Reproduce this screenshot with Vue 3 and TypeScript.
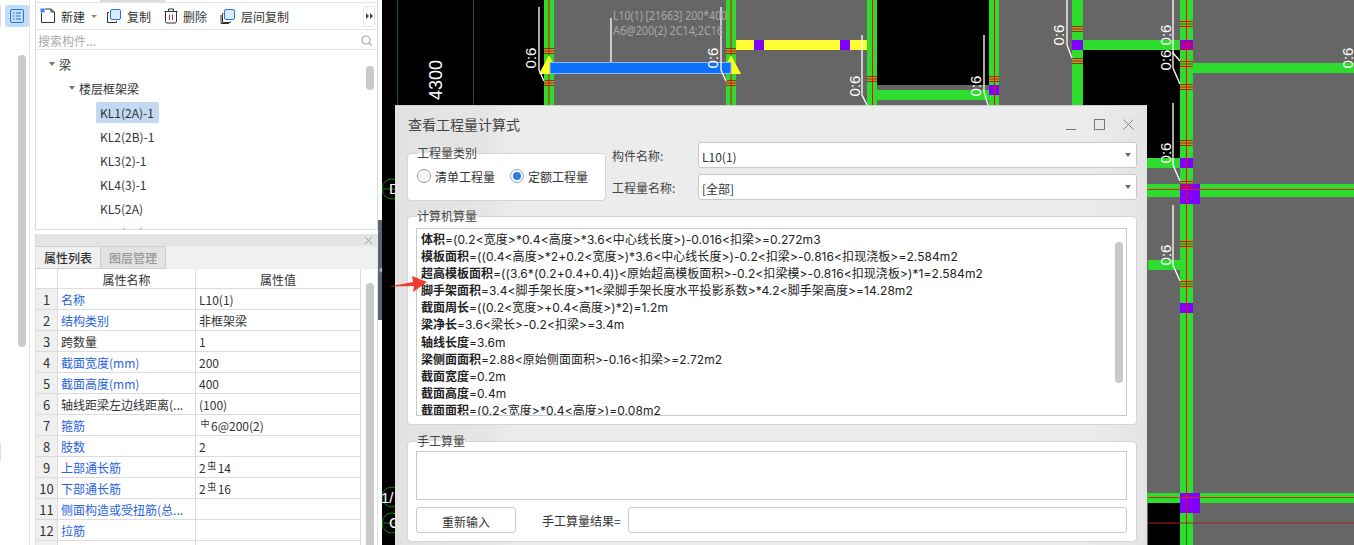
<script setup lang="ts">
interface Prop { no: number; name: string; value: string; blue: boolean; mark?: string; rest?: string; lead?: string }

const tree: string[] = ['KL2(2B)-1', 'KL3(2)-1', 'KL4(3)-1', 'KL5(2A)', 'KL6(2B)']

const props: Prop[] = [
  { no: 1, name: '名称', value: 'L10(1)', blue: true },
  { no: 2, name: '结构类别', value: '非框架梁', blue: true },
  { no: 3, name: '跨数量', value: '1', blue: false },
  { no: 4, name: '截面宽度(mm)', value: '200', blue: true },
  { no: 5, name: '截面高度(mm)', value: '400', blue: true },
  { no: 6, name: '轴线距梁左边线距离(...', value: '(100)', blue: false },
  { no: 7, name: '箍筋', value: '', blue: true, lead: '', mark: '中', rest: '6@200(2)' },
  { no: 8, name: '肢数', value: '2', blue: true },
  { no: 9, name: '上部通长筋', value: '', blue: true, lead: '2', mark: '虫', rest: '14' },
  { no: 10, name: '下部通长筋', value: '', blue: true, lead: '2', mark: '虫', rest: '16' },
  { no: 11, name: '侧面构造或受扭筋(总...', value: '', blue: true },
  { no: 12, name: '拉筋', value: '', blue: true },
  { no: 13, name: '', value: '', blue: false },
]

const formulas: [string, string][] = [
  ['体积', '=(0.2<宽度>*0.4<高度>*3.6<中心线长度>)-0.016<扣梁>=0.272m3'],
  ['模板面积', '=((0.4<高度>*2+0.2<宽度>)*3.6<中心线长度>)-0.2<扣梁>-0.816<扣现浇板>=2.584m2'],
  ['超高模板面积', '=((3.6*(0.2+0.4+0.4))<原始超高模板面积>-0.2<扣梁模>-0.816<扣现浇板>)*1=2.584m2'],
  ['脚手架面积', '=3.4<脚手架长度>*1<梁脚手架长度水平投影系数>*4.2<脚手架高度>=14.28m2'],
  ['截面周长', '=((0.2<宽度>+0.4<高度>)*2)=1.2m'],
  ['梁净长', '=3.6<梁长>-0.2<扣梁>=3.4m'],
  ['轴线长度', '=3.6m'],
  ['梁侧面面积', '=2.88<原始侧面面积>-0.16<扣梁>=2.72m2'],
  ['截面宽度', '=0.2m'],
  ['截面高度', '=0.4m'],
  ['截面面积', '=(0.2<宽度>*0.4<高度>)=0.08m2'],
]

// canvas data: everything is in page pixels, the svg viewBox starts at x=382
const columns: [number, number][] = [[544, 10], [726, 10], [867, 10], [989, 10], [1072, 11], [1180, 13]]
const beams: [number, number, number, number][] = [
  [877, 90, 112, 10], [1083, 40, 97, 10], [1193, 63, 161, 10], [1100, 158, 80, 10],
  [1100, 184, 254, 13], [1148, 260, 32, 10], [1100, 493, 254, 10],
]
const purple: [number, number, number, number][] = [
  [754, 40, 10, 10], [840, 40, 10, 10], [989, 85, 10, 10], [1072, 40, 11, 10], [1180, 40, 13, 10],
  [1180, 158, 13, 10], [1180, 184, 20, 20], [1180, 303, 13, 10], [1180, 493, 20, 20],
]
const hatches: [number, number, number][] = [
  [544, 10, 48], [544, 10, 80], [726, 10, 48], [726, 10, 80], [867, 10, 76], [989, 10, 76],
  [1072, 11, 26], [1072, 11, 58], [1180, 13, 21], [1180, 13, 43], [1180, 13, 61], [1180, 13, 84],
  [1180, 13, 140], [1180, 13, 181], [1180, 13, 241], [1180, 13, 281],
]
const leaders: string[] = [
  'M539 7V70L544 81', 'M721 7V70L726 81', 'M611 18V62', 'M862 35V95L867 105', 'M984 35V92L988 105',
  'M1067 0V45L1072 58', 'M1173 0V53L1180 61', 'M1173 52V68L1180 84', 'M1173 103V165L1180 181', 'M1173 205V265L1180 281',
]
const ratios: [number, number][] = [
  [536, 58], [718, 58], [860, 86], [981, 86], [1064, 35], [1171, 35], [1171, 60], [1171, 153], [1171, 255], [1353, 58],
]
</script>

<template>
  <div class="page">
    <aside class="rail">
      <span class="rail-mark rail-mark-top"></span>
      <button class="rail-btn">
        <svg width="16" height="16" viewBox="0 0 16 16" fill="none" stroke="#1f7ae0">
          <rect x="1.5" y="1.5" width="13" height="13" rx="1.5" />
          <path d="M4 5H5.500M7 5H12M4 8H5.500M7 8H11M4 11H5.500M7 11H12" />
        </svg>
      </button>
      <div class="rail-track"><div class="rail-thumb"></div></div>
      <span class="rail-mark rail-mark-low"></span>
    </aside>

    <section class="side">
      <div class="list-panel">
        <div class="tabs-stub"><span></span><i></i></div>
        <div class="toolbar">
          <span class="tool">
            <svg width="16" height="16" viewBox="0 0 16 16" fill="none" stroke="#333">
              <path d="M1.500 5V14.500H14.500V4L11 1H5" />
              <path d="M11 1V4H14.500" />
              <rect x="0.500" y="0.500" width="4" height="4" fill="#2f86e8" stroke="none" />
            </svg>
            新建<b class="caret"></b>
          </span>
          <span class="tool">
            <svg width="16" height="16" viewBox="0 0 16 16" fill="none">
              <path d="M3 4.500H1.500V14.500H10.500V13" stroke="#333" />
              <rect x="4.500" y="1.500" width="10" height="10" rx="1.500" fill="#dcebfb" stroke="#1f7ae0" />
            </svg>
            复制
          </span>
          <span class="tool">
            <svg width="14" height="16" viewBox="0 0 14 16" fill="none" stroke="#333">
              <path d="M0.500 3.500H13.500M4.500 3V1H9.500V3M1.500 3.500V13.500Q1.500 15 3 15H11Q12.500 15 12.500 13.500V3.500" />
              <path d="M5.500 6.500V12M8.500 6.500V12" stroke="#d8232a" />
            </svg>
            删除
          </span>
          <span class="tool">
            <svg width="16" height="16" viewBox="0 0 16 16" fill="none">
              <path d="M3.500 5.500H2.500V14.500H10.500V13.500M1 7V15.500H9" stroke="#333" />
              <rect x="4.500" y="1.500" width="10" height="10" rx="1.500" fill="#dcebfb" stroke="#1f7ae0" />
            </svg>
            层间复制
          </span>
          <span class="more">
            <svg width="7" height="6" viewBox="0 0 7 6" fill="#444"><path d="M0 0L3 3L0 6ZM4 0L7 3L4 6Z" /></svg>
          </span>
        </div>
        <div class="search">
          <span>搜索构件...</span>
          <svg width="11" height="11" viewBox="0 0 11 11" fill="none" stroke="#aaa" stroke-width="1.200">
            <circle cx="5" cy="5" r="4" /><path d="M8 8L10.500 10.500" />
          </svg>
        </div>
        <div class="tree">
          <div class="tree-row lvl-1"><b class="node"></b>梁</div>
          <div class="tree-row lvl-2"><b class="node"></b>楼层框架梁</div>
          <div class="tree-row lvl-3"><span class="selected">KL1(2A)-1</span></div>
          <div v-for="t in tree" :key="t" class="tree-row lvl-3"><span class="leaf">{{ t }}</span></div>
          <div class="tree-scroll"></div>
        </div>
      </div>

      <div class="prop-panel">
        <div class="prop-head">
          <svg width="9" height="9" viewBox="0 0 9 9" stroke="#999" fill="none"><path d="M1 1L8 8M8 1L1 8" /></svg>
        </div>
        <div class="prop-tabs">
          <span class="prop-tab active">属性列表</span>
          <span class="prop-tab">图层管理</span>
        </div>
        <div class="prop-body">
          <div class="prop-table">
            <div class="prow head">
              <span class="cell no"></span>
              <span class="cell name center">属性名称</span>
              <span class="cell val center">属性值</span>
            </div>
            <div v-for="p in props" :key="p.no" class="prow">
              <span class="cell no">{{ p.no === 13 ? '' : p.no }}</span>
              <span class="cell name" :class="{ blue: p.blue }">{{ p.name }}</span>
              <span class="cell val">
                {{ p.value }}<template v-if="p.mark">{{ p.lead }}<sup class="rebar">{{ p.mark }}</sup>{{ p.rest }}</template>
              </span>
            </div>
          </div>
          <div class="prop-scroll"><div class="prop-thumb"></div></div>
        </div>
      </div>
    </section>

    <div class="splitter"><div class="handle"><b></b></div></div>

    <svg class="cad" width="972" height="545" viewBox="382 0 972 545">
      <rect x="382" y="0" width="972" height="545" fill="#000" />
      <rect x="544" y="0" width="810" height="545" fill="#666" />
      <rect x="877" y="0" width="112" height="85" fill="#000" />
      <rect x="1083" y="50" width="97" height="108" fill="#000" />
      <rect x="1148" y="503" width="32" height="42" fill="#000" />
      <path d="M397.500 0V105M473.500 0V105" stroke="#0a5a0a" />
      <rect v-for="(b, i) in beams" :key="'b' + i" :x="b[0]" :y="b[1]" :width="b[2]" :height="b[3]" fill="#2ddc2d" />
      <rect x="736" y="40" width="132" height="10" fill="#ffff33" />
      <rect v-for="c in columns" :key="c[0]" :x="c[0]" y="0" :width="c[1]" height="545" fill="#2ddc2d" />
      <rect v-for="(p, i) in purple" :key="'p' + i" :x="p[0]" :y="p[1]" :width="p[2]" :height="p[3]" fill="#8000ff" />
      <path d="M549 0V105M731 0V105" stroke="#c0401a" stroke-width="1.500" />
      <path d="M872.500 0V105M994.500 0V105M1186.500 0V523" stroke="#ff0000" />
      <path d="M1186.500 523V545" stroke="#0a7a0a" />
      <path d="M1100 189.500H1354M1148 497.500H1354" stroke="#e02020" />
      <path d="M1148 523H1354" stroke="#b02020" />
      <g v-for="(h, i) in hatches" :key="'h' + i" stroke="#ff0000" stroke-width="1.200">
        <path :d="`M${h[0]} ${h[2] + 0.5}h${h[1]}M${h[0]} ${h[2] + 3}h${h[1]}M${h[0]} ${h[2] + 5.5}h${h[1]}`" />
      </g>
      <path d="M549 55L559 74H539ZM731 55L741 74H721Z" fill="#ffff1a" />
      <rect x="550" y="62.500" width="181" height="11" fill="#0f6fff" stroke="#8ab8f0" />
      <path v-for="(l, i) in leaders" :key="'l' + i" :d="l" fill="none" stroke="#fff" stroke-width="1.300" />
      <text v-for="(r, i) in ratios" :key="'r' + i" class="ratio" :transform="`translate(${r[0]} ${r[1]}) rotate(-90)`" text-anchor="middle">0:6</text>
      <text class="axis" transform="translate(442 80) rotate(-90)" text-anchor="middle">4300</text>
      <text class="label" x="613" y="20" textLength="114" lengthAdjust="spacingAndGlyphs">L10(1) [21663] 200*400</text>
      <text class="label" x="613" y="35" textLength="110" lengthAdjust="spacingAndGlyphs">A6@200(2) 2C14;2C16</text>
      <g fill="none" stroke="#0a8a0a">
        <circle cx="392" cy="189" r="10" /><path d="M382 189H395" />
        <circle cx="392" cy="497" r="10" />
        <circle cx="392" cy="523" r="10" /><path d="M382 523H395" />
      </g>
      <text class="marker" x="389" y="194">D</text>
      <text class="marker" x="381" y="503">1/</text>
      <text class="marker" x="389" y="528">C</text>
    </svg>

    <div class="dialog">
      <header class="dlg-title">
        <span>查看工程量计算式</span>
        <div class="dlg-ctrl">
          <svg width="10" height="11" viewBox="0 0 10 11" stroke="#777" fill="none"><path d="M0 10.500H10" /></svg>
          <svg width="11" height="11" viewBox="0 0 11 11" stroke="#777" fill="none"><rect x="0.500" y="0.500" width="10" height="10" /></svg>
          <svg width="11" height="11" viewBox="0 0 11 11" stroke="#888" fill="none"><path d="M0.500 0.500L10.500 10.500M10.500 0.500L0.500 10.500" /></svg>
        </div>
      </header>

      <div class="dlg-top">
        <div class="group kind">
          <span class="legend">工程量类别</span>
          <label class="radio"><i class="dot"></i>清单工程量</label>
          <label class="radio"><i class="dot on"></i>定额工程量</label>
        </div>
        <div class="fields">
          <div class="field"><span class="field-label">构件名称:</span><div class="combo"><span>L10(1)</span><b class="combo-arrow"></b></div></div>
          <div class="field"><span class="field-label">工程量名称:</span><div class="combo"><span>[全部]</span><b class="combo-arrow"></b></div></div>
        </div>
      </div>

      <div class="group auto">
        <span class="legend">计算机算量</span>
        <div class="formula-box">
          <div v-for="f in formulas" :key="f[0]" class="formula"><b>{{ f[0] }}</b>{{ f[1] }}</div>
          <div class="formula-scroll"></div>
        </div>
      </div>

      <div class="group manual">
        <span class="legend">手工算量</span>
        <div class="manual-box"></div>
        <div class="manual-foot">
          <button class="reset">重新输入</button>
          <span class="result-label">手工算量结果=</span>
          <div class="result"></div>
        </div>
      </div>
    </div>

    <svg class="arrow" width="40" height="18" viewBox="0 0 40 18">
      <path d="M0 10.500L24 6L23 0L38 6L24 16L25 10Z" fill="#f03a32" />
    </svg>
  </div>
</template>

<style>
body { background: #fff; }
</style>

<style scoped>
.page {
  position: relative;
  display: flex;
  width: 1354px;
  height: 545px;
  overflow: hidden;
  background: #fff;
  color: #333;
  font-family: "Noto Sans CJK SC", "Noto Sans", sans-serif;
  font-size: 12px;
}

/* left rail */
.rail {
  position: relative;
  flex: none;
  width: 30px;
  box-sizing: border-box;
  border-right: 1px solid #e2e2e2;
  display: flex;
  flex-direction: column;
  align-items: flex-end;
  padding-top: 5px;
}
.rail-mark { position: absolute; left: 0; width: 1px; background: #cfe3f8; }
.rail-mark-top { top: 5px; height: 22px; }
.rail-mark-low { top: 443px; height: 18px; }
.rail-btn {
  width: 24px;
  height: 22px;
  padding: 0;
  border: none;
  border-radius: 3px;
  background: #c5dcf4;
  display: flex;
  align-items: center;
  justify-content: center;
}
.rail-track { margin: 28px 3px 0 0; width: 8px; }
.rail-thumb { width: 8px; height: 292px; border-radius: 4px; background: #cbcbcb; }

/* left panels */
.side {
  flex: none;
  width: 343px;
  margin-left: 5px;
  display: flex;
  flex-direction: column;
}
.list-panel {
  height: 230px;
  box-sizing: border-box;
  border: 1px solid #dcdcdc;
  border-top: none;
  display: flex;
  flex-direction: column;
}
.tabs-stub { height: 3px; display: flex; border-bottom: 1px solid #e4e4e4; box-sizing: border-box; }
.tabs-stub span { width: 64px; }
.tabs-stub i { width: 65px; background: #dcdcdc; }
.toolbar {
  height: 27px;
  box-sizing: border-box;
  display: flex;
  align-items: center;
  padding-left: 4px;
  border-bottom: 1px solid #e4e4e4;
}
.tool { display: flex; align-items: center; gap: 5px; margin-right: 13px; color: #333; }
.caret {
  width: 0;
  height: 0;
  margin-left: 1px;
  margin-right: -4px;
  border: 3px solid transparent;
  border-top: 3px solid #888;
  border-bottom: none;
}
.more {
  margin-left: auto;
  margin-right: 2px;
  width: 10px;
  height: 19px;
  border: 1px solid #e4e4e4;
  border-radius: 3px;
  display: flex;
  align-items: center;
  justify-content: center;
}
.search {
  height: 20px;
  box-sizing: border-box;
  display: flex;
  align-items: center;
  justify-content: space-between;
  padding: 1px 5px 0 2px;
  color: #aaa;
  border-bottom: 1px solid #e4e4e4;
}
.tree { position: relative; flex: 1; overflow: hidden; padding-top: 2px; }
.tree-row { height: 24px; display: flex; align-items: center; color: #333; }
.lvl-1 { padding-left: 13px; }
.lvl-2 { padding-left: 33px; }
.lvl-3 { padding-left: 60px; }
.node {
  width: 0;
  height: 0;
  margin-right: 4px;
  border: 3px solid transparent;
  border-top: 4px solid #777;
  border-bottom: none;
}
.selected, .leaf { padding: 0 5px 0 4px; height: 21px; line-height: 21px; border-radius: 2px; }
.selected { background: #c2d9f1; }
.tree-scroll {
  position: absolute;
  top: 16px;
  right: 3px;
  width: 8px;
  height: 24px;
  border-radius: 4px;
  background: #c9c9c9;
}
.prop-panel {
  margin-top: 4px;
  flex: 1;
  min-height: 0;
  border-right: 1px solid #e4e4e4;
  border-left: 1px solid #dcdcdc;
  display: flex;
  flex-direction: column;
}
.prop-head {
  height: 12px;
  background: #e4e4e4;
  display: flex;
  align-items: center;
  justify-content: flex-end;
  padding-right: 4px;
  flex: none;
}
.prop-tabs { height: 23px; background: #f0f0f0; display: flex; flex: none; }
.prop-tab {
  width: 65px;
  box-sizing: border-box;
  text-align: center;
  line-height: 21px;
  color: #999;
  font-weight: 500;
  border: 1px solid #cfcfcf;
  border-left: none;
  background: #e2e2e2;
}
.prop-tab.active { background: #f0f0f0; color: #333; }
.prop-body { flex: 1; display: flex; min-height: 0; overflow: hidden; }
.prop-table { width: 325px; flex: none; }
.prow { display: flex; height: 21px; box-sizing: border-box; border-bottom: 1px solid #dcdcdc; line-height: 22px; }
.prow.head { height: 20px; line-height: 21px; }
.cell { box-sizing: border-box; border-right: 1px solid #dcdcdc; padding-left: 3px; white-space: nowrap; overflow: hidden; }
.cell.no { width: 22px; padding: 0; text-align: center; background: #f0f0f0; font-size: 13px; }
.head .cell.no { background: #fff; }
.cell.name { width: 138px; }
.cell.val { width: 165px; }
.cell.center { text-align: center; padding: 0; }
.blue { color: #2a62e0; }
.rebar { font-size: 9px; line-height: 0; vertical-align: 4px; margin: 0 1.500px; }
.prop-scroll { flex: 1; position: relative; }
.prop-thumb {
  position: absolute;
  top: 14px;
  left: 5px;
  width: 8px;
  height: 300px;
  border-radius: 4px;
  background: #c9c9c9;
}

/* splitter between the panels and the drawing */
.splitter { flex: none; width: 4px; display: flex; align-items: center; }
.handle {
  width: 4px;
  height: 100px;
  margin-top: -5px;
  background: #5b6570;
  display: flex;
  align-items: center;
  justify-content: center;
}
.handle b { width: 0; height: 0; border: 3px solid transparent; border-right: 3px solid #b5bbc2; border-left: none; }

.cad { flex: none; display: block; }
.ratio { fill: #fff; font: 15px "Liberation Sans", sans-serif; }
.axis { fill: #fff; font: 18px "Liberation Sans", sans-serif; }
.label { fill: #a8a8a8; font: 12px "Noto Sans", sans-serif; }
.marker { fill: #fff; font: 15px "Liberation Sans", sans-serif; }

/* floating dialog */
.dialog {
  position: absolute;
  left: 395px;
  top: 105px;
  width: 752px;
  height: 440px;
  box-sizing: border-box;
  padding: 0 10px 0 12px;
  background: linear-gradient(90deg, #e2e2e2, #e5e5e5 90px, #ececec 120px, #ececec 690px, #e4e4e4);
  border-top: 1px solid #d0d0d0;
  display: flex;
  flex-direction: column;
}
.dlg-title {
  flex: none;
  height: 37px;
  display: flex;
  align-items: center;
  justify-content: space-between;
  font-size: 14px;
  color: #444;
  padding: 0 0 1px 1px;
  box-sizing: border-box;
}
.dlg-ctrl { display: flex; align-items: center; gap: 18px; padding-right: 3px; }
.dlg-top { flex: none; display: flex; height: 58px; }
.group {
  position: relative;
  box-sizing: border-box;
  background: #fff;
  border: 1px solid #d4d4d4;
  border-radius: 4px;
}
.legend {
  position: absolute;
  top: -9px;
  left: 9px;
  line-height: 16px;
  color: #444;
  background: linear-gradient(180deg, transparent 8px, #fff 8px);
}
.kind {
  width: 199px;
  height: 48px;
  margin-top: 10px;
  display: flex;
  align-items: center;
  gap: 15px;
  padding: 0 0 2px 9px;
}
.radio { display: flex; align-items: center; gap: 4px; color: #333; }
.dot {
  position: relative;
  width: 14px;
  height: 14px;
  box-sizing: border-box;
  border: 1px solid #999;
  border-radius: 50%;
  background: #fff;
}
.dot.on { display: flex; align-items: center; justify-content: center; border-color: #7aa7dc; }
.dot.on::after { content: ""; width: 8px; height: 8px; border-radius: 50%; background: #2a7de0; }
.fields { flex: 1; margin-left: 6px; margin-top: -1px; display: flex; flex-direction: column; gap: 6px; }
.field { display: flex; align-items: center; height: 26px; flex: none; }
.field-label { width: 86px; color: #444; flex: none; padding-top: 1px; }
.combo {
  flex: 1;
  height: 26px;
  box-sizing: border-box;
  border: 1px solid #c9c9c9;
  border-radius: 3px;
  background: #fff;
  padding-left: 3px;
  display: flex;
  justify-content: space-between;
  align-items: center;
}
.combo span { padding-top: 2px; }
.combo-arrow {
  width: 0;
  height: 0;
  margin-right: 5px;
  border: 3px solid transparent;
  border-top: 4px solid #667;
  border-bottom: none;
}
.auto { flex: none; height: 209px; margin-top: 15px; padding: 11px 9px 9px 8px; }
.formula-box {
  position: relative;
  height: 188px;
  box-sizing: border-box;
  border: 1px solid #c9c9c9;
  padding: 1px 4px;
  overflow: hidden;
}
.formula {
  height: 17.100px;
  line-height: 17px;
  white-space: nowrap;
  color: #222;
  font-family: Inter, "Noto Sans CJK SC", sans-serif;
  letter-spacing: 0.07px;
}
.formula b { font-family: "Noto Sans CJK SC", sans-serif; font-weight: 700; letter-spacing: 0; }
.formula-scroll {
  position: absolute;
  top: 13px;
  right: 3px;
  width: 8px;
  height: 141px;
  border-radius: 4px;
  background: #c9c9c9;
}
.manual { flex: none; height: 101px; margin-top: 16px; padding: 9px 9px 0 8px; }
.manual-box { height: 49px; box-sizing: border-box; border: 1px solid #c9c9c9; }
.manual-foot { display: flex; align-items: center; margin-top: 7px; height: 26px; }
.reset {
  width: 100px;
  height: 26px;
  padding: 2px 0 0;
  border: 1px solid #c9c9c9;
  border-radius: 3px;
  background: #fff;
  font: inherit;
  color: #333;
}
.result-label { margin-left: 26px; width: 86px; flex: none; color: #333; white-space: nowrap; }
.result { flex: 1; height: 26px; box-sizing: border-box; border: 1px solid #c9c9c9; border-radius: 3px; }
.arrow { position: absolute; left: 389px; top: 276px; }
</style>
